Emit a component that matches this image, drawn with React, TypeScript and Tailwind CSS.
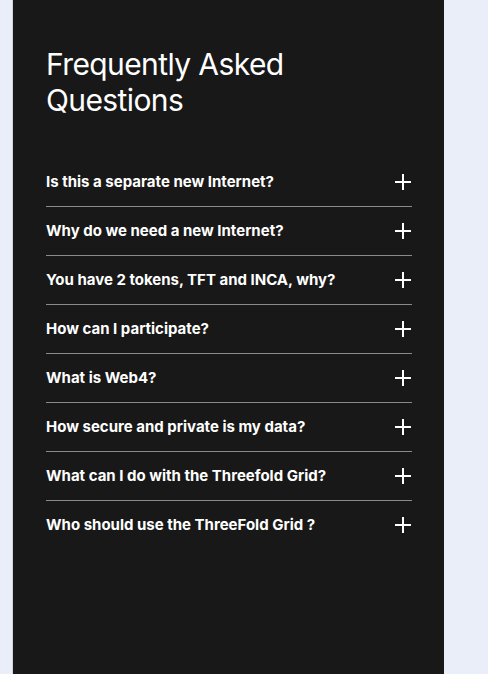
import React, { useState } from 'react';

const questions = [
    'Is this a separate new Internet?',
    'Why do we need a new Internet?',
    'You have 2 tokens, TFT and INCA, why?',
    'How can I participate?',
    'What is Web4?',
    'How secure and private is my data?',
    'What can I do with the Threefold Grid?',
    'Who should use the ThreeFold Grid ?',
];

const PlusIcon: React.FC = () => (
    <svg width="18" height="18" viewBox="0 0 18 18" fill="none" stroke="currentColor" strokeWidth="2">
        <path d="M9 1v16M1 9h16" />
    </svg>
);

const App: React.FC = () => {
    const [open, setOpen] = useState<number | null>(null);

    return (
        <div className="flex min-h-screen bg-[#eaeef8] font-['Inter','Liberation_Sans',sans-serif]">
            <div className="ml-3 w-[432px] min-h-[674px] border-l border-[#cfd3dc] bg-[#181818] pl-[33px] pr-[32px] pt-[46px]">
                <h2 className="text-[30px] leading-[36px] font-normal text-white tracking-[-0.02em]">
                    Frequently Asked
                    <br />
                    Questions
                </h2>

                <div className="mt-10 w-[366px]">
                    {questions.map((q, i) => (
                        <div
                            key={q}
                            className={i < questions.length - 1 ? 'border-b border-[#8a8a8a]' : ''}
                        >
                            <button
                                onClick={() => setOpen(open === i ? null : i)}
                                className="flex w-full items-center justify-between py-3 text-left text-white"
                            >
                                <span className="text-[15px] leading-6 font-bold">{q}</span>
                                <PlusIcon />
                            </button>
                        </div>
                    ))}
                </div>
            </div>
        </div>
    );
};

export default App;
